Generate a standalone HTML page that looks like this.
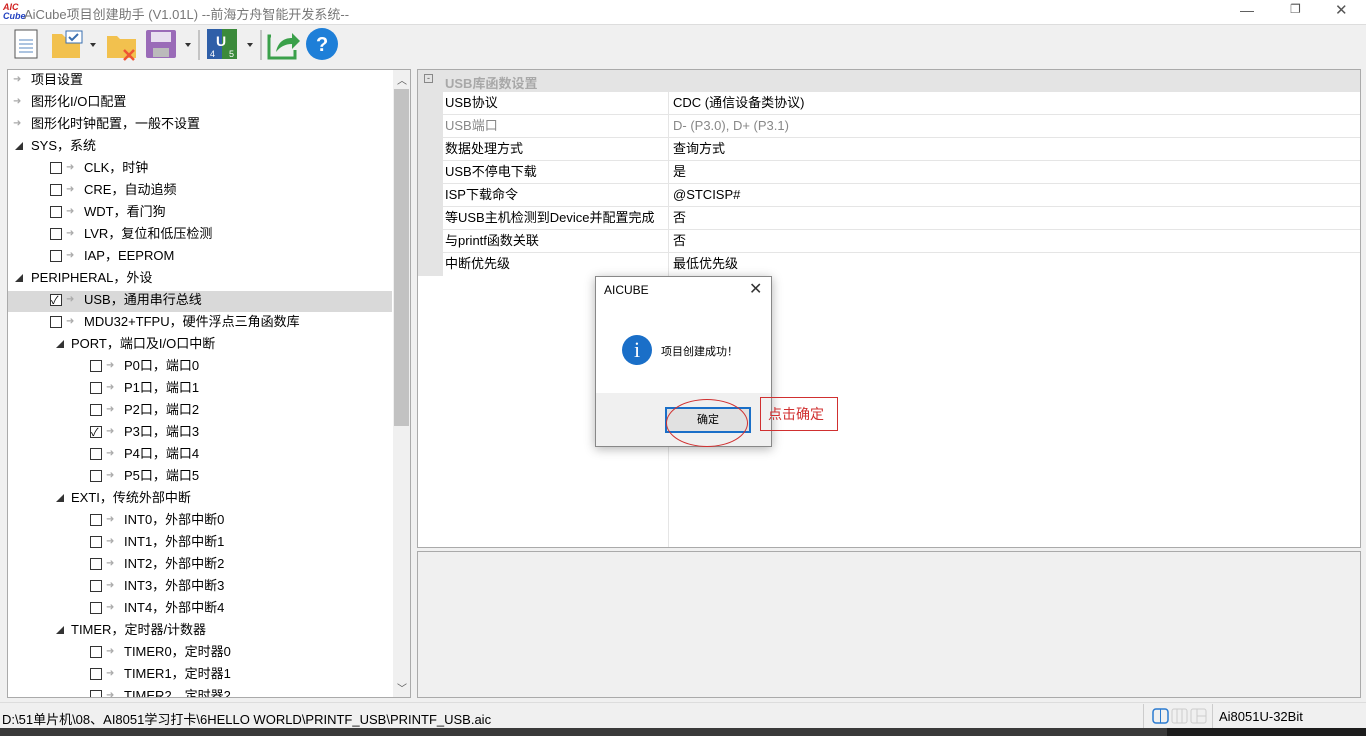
<!DOCTYPE html>
<html><head><meta charset="utf-8"><style>
*{margin:0;padding:0;box-sizing:border-box}
body{width:1366px;height:736px;overflow:hidden;background:#f0f0f0;font-family:"Liberation Sans","Noto Sans CJK SC",sans-serif;font-size:13px;color:#000;position:relative}
.a{position:absolute}
.row{position:absolute;height:22px;line-height:22px;white-space:nowrap}
.cb{position:absolute;width:12px;height:12px;border:1px solid #333;background:#fff;top:5px}
.ar{position:absolute;color:#aaa;font-size:10px}
.tri{position:absolute;font-size:8px;color:#333}
.pr{position:absolute;left:443px;width:917px;height:23px;line-height:22px;border-bottom:1px solid #e5e5e5}
.pr span{position:absolute}
</style></head><body>
<div class="a" style="left:0;top:0;width:1366px;height:24px;background:#fff"></div>
<div class="a" style="left:3px;top:3px;font-size:9px;font-weight:bold;color:#d02020;line-height:9px;font-style:italic">AIC<br><span style="color:#2040c0">Cube</span></div>
<div class="a" style="left:24px;top:4px;color:#777;font-size:13px">AiCube项目创建助手 (V1.01L) --前海方舟智能开发系统--</div>
<div class="a" style="left:1240px;top:2px;color:#555;font-size:14px">—</div>
<div class="a" style="left:1290px;top:2px;color:#555;font-size:12px">❐</div>
<div class="a" style="left:1335px;top:1px;color:#555;font-size:15px">✕</div>
<div class="a" style="left:0;top:24px;width:1366px;height:1px;background:#ddd"></div>
<!-- toolbar -->
<svg class="a" style="left:0;top:26px" width="360" height="40">
<rect x="15" y="4" width="22" height="28" fill="#fff" stroke="#555"/><path d="M19 14h14M19 18h14M19 22h14M19 26h14" stroke="#5a8ac0"/>
<path d="M52 8h10l3 3h15v21H52z" fill="#f2c14e"/><rect x="66" y="5" width="16" height="12" fill="#fff" stroke="#3a6fb0"/><path d="M69 11l3 3 6-6" stroke="#3a6fb0" fill="none" stroke-width="2"/>
<path d="M90 17h6l-3 4z" fill="#333"/>
<path d="M107 10h10l3 3h16v19h-29z" fill="#f2c14e"/><path d="M124 24l10 10M134 24l-10 10" stroke="#e53" stroke-width="2.5"/>
<rect x="146" y="4" width="30" height="28" rx="2" fill="#9a6bb8"/><rect x="151" y="6" width="20" height="10" fill="#e8dff0"/><rect x="153" y="22" width="16" height="9" fill="#bbb"/>
<path d="M185 17h6l-3 4z" fill="#333"/>
<line x1="199" y1="4" x2="199" y2="34" stroke="#999"/>
<rect x="207" y="3" width="30" height="30" fill="#2f5fa8"/><path d="M222 3h15v30h-15z" fill="#3b8a3b"/><text x="216" y="20" fill="#fff" font-size="14" font-weight="bold" font-family="Liberation Sans">U</text><text x="210" y="31" fill="#fff" font-size="9">4</text><text x="229" y="31" fill="#fff" font-size="9">5</text>
<path d="M247 17h6l-3 4z" fill="#333"/>
<line x1="261" y1="4" x2="261" y2="34" stroke="#999"/>
<path d="M271 10h-2v22h26v-8" fill="none" stroke="#3aa04a" stroke-width="3"/><path d="M276 26c2-10 8-14 16-14v-5l8 8-8 8v-5c-7 0-12 3-16 8z" fill="#3aa04a"/>
<circle cx="322" cy="18" r="16" fill="#1e7fd8"/><text x="316" y="25" fill="#fff" font-size="20" font-weight="bold" font-family="Liberation Sans">?</text>
</svg>
<!-- left tree -->
<div class="a" style="left:7px;top:69px;width:404px;height:629px;background:#fff;border:1px solid #aaa;overflow:hidden">
<div class="a" style="left:385px;top:0;width:17px;height:627px;background:#f0f0f0"></div>
<div class="a" style="left:386px;top:19px;width:15px;height:337px;background:#c2c2c2"></div>
<div class="a" style="left:389px;top:2px;font-size:10px;color:#555">︿</div>
<div class="a" style="left:389px;top:610px;font-size:10px;color:#555">﹀</div>
<div class="a" style="left:0;top:221px;width:384px;height:21px;background:#d9d9d9"></div>
</div>
<div id="tree"></div>
<script>
var items=[[0,'项目设置'],[0,'图形化I/O口配置'],[0,'图形化时钟配置，一般不设置'],[1,'SYS，系统'],[2,'CLK，时钟'],[2,'CRE，自动追频'],[2,'WDT，看门狗'],[2,'LVR，复位和低压检测'],[2,'IAP，EEPROM'],[1,'PERIPHERAL，外设'],[2,'USB，通用串行总线',1],[2,'MDU32+TFPU，硬件浮点三角函数库'],[3,'PORT，端口及I/O口中断'],[4,'P0口，端口0'],[4,'P1口，端口1'],[4,'P2口，端口2'],[4,'P3口，端口3',1],[4,'P4口，端口4'],[4,'P5口，端口5'],[3,'EXTI，传统外部中断'],[4,'INT0，外部中断0'],[4,'INT1，外部中断1'],[4,'INT2，外部中断2'],[4,'INT3，外部中断3'],[4,'INT4，外部中断4'],[3,'TIMER，定时器/计数器'],[4,'TIMER0，定时器0'],[4,'TIMER1，定时器1'],[4,'TIMER2，定时器2']];
var h='';items.forEach(function(it,i){var t=69+22*i,l=it[0],s='';
if(l==0)s='<span class="ar" style="left:13px">➜</span><span class="a" style="left:31px">'+it[1]+'</span>';
if(l==1)s='<span class="tri" style="left:15px;top:1px">◢</span><span class="a" style="left:31px">'+it[1]+'</span>';
if(l==2)s='<span class="cb" style="left:50px;'+(it[2]?'':'')+'">'+(it[2]?'<span class="a" style="left:0;top:-5px;font-size:11px">✓</span>':'')+'</span><span class="ar" style="left:66px">➜</span><span class="a" style="left:84px">'+it[1]+'</span>';
if(l==3)s='<span class="tri" style="left:56px;top:1px">◢</span><span class="a" style="left:71px">'+it[1]+'</span>';
if(l==4)s='<span class="cb" style="left:90px">'+(it[2]?'<span class="a" style="left:0;top:-5px;font-size:11px">✓</span>':'')+'</span><span class="ar" style="left:106px">➜</span><span class="a" style="left:124px">'+it[1]+'</span>';
if(t<690)h+='<div class="row" style="top:'+t+'px;left:0;width:390px;height:'+Math.min(22,697-t)+'px;overflow:hidden">'+s+'</div>';});
document.getElementById('tree').innerHTML=h;
</script>
<!-- right grid -->
<div class="a" style="left:417px;top:69px;width:944px;height:479px;background:#fff;border:1px solid #aaa"></div>
<div class="a" style="left:418px;top:70px;width:942px;height:22px;background:#e4e4e4"></div>
<div class="a" style="left:418px;top:92px;width:25px;height:184px;background:#e4e4e4"></div>
<div class="a" style="left:424px;top:74px;width:9px;height:9px;border:1px solid #888;font-size:9px;line-height:6px;text-align:center;color:#555">-</div>
<div class="a" style="left:445px;top:73px;color:#a8a8a8;font-weight:bold">USB库函数设置</div>
<div class="a" style="left:668px;top:92px;width:1px;height:455px;background:#e5e5e5"></div>
<div class="pr" style="top:92px"><span style="left:2px">USB协议</span><span style="left:230px">CDC (通信设备类协议)</span></div>
<div class="pr" style="top:115px;color:#888"><span style="left:2px">USB端口</span><span style="left:230px">D- (P3.0), D+ (P3.1)</span></div>
<div class="pr" style="top:138px"><span style="left:2px">数据处理方式</span><span style="left:230px">查询方式</span></div>
<div class="pr" style="top:161px"><span style="left:2px">USB不停电下载</span><span style="left:230px">是</span></div>
<div class="pr" style="top:184px"><span style="left:2px">ISP下载命令</span><span style="left:230px">@STCISP#</span></div>
<div class="pr" style="top:207px"><span style="left:2px">等USB主机检测到Device并配置完成</span><span style="left:230px">否</span></div>
<div class="pr" style="top:230px"><span style="left:2px">与printf函数关联</span><span style="left:230px">否</span></div>
<div class="pr" style="top:253px;border:none"><span style="left:2px">中断优先级</span><span style="left:230px">最低优先级</span></div>
<div class="a" style="left:417px;top:551px;width:944px;height:147px;background:#f0f0f0;border:1px solid #aaa"></div>
<!-- status -->
<div class="a" style="left:0;top:702px;width:1366px;height:1px;background:#ddd"></div>
<div class="a" style="left:2px;top:709px;font-size:13px">D:\51单片机\08、AI8051学习打卡\6HELLO WORLD\PRINTF_USB\PRINTF_USB.aic</div>
<div class="a" style="left:1143px;top:704px;width:1px;height:24px;background:#ccc"></div>
<div class="a" style="left:1212px;top:704px;width:1px;height:24px;background:#ccc"></div>
<svg class="a" style="left:1152px;top:708px" width="56" height="16"><rect x="1" y="1" width="15" height="14" rx="3" fill="none" stroke="#2a7ad0" stroke-width="1.5"/><line x1="8.5" y1="1" x2="8.5" y2="15" stroke="#2a7ad0"/><rect x="20" y="1" width="15" height="14" rx="2" fill="none" stroke="#ccc"/><path d="M25 1v14M30 1v14" stroke="#ccc"/><rect x="39" y="1" width="15" height="14" rx="2" fill="none" stroke="#ccc"/><path d="M45 1v14M45 8h9" stroke="#ccc"/></svg>
<div class="a" style="left:1219px;top:709px">Ai8051U-32Bit</div>
<div class="a" style="left:1167px;top:728px;width:199px;height:8px;background:#1c1c1c"></div>
<div class="a" style="left:0;top:728px;width:1167px;height:8px;background:#3a3a3a"></div>
<!-- dialog -->
<div class="a" style="left:595px;top:276px;width:177px;height:171px;background:#fff;border:1px solid #888;box-shadow:0 2px 10px rgba(0,0,0,.3)"></div>
<div class="a" style="left:604px;top:283px;font-size:12px">AICUBE</div>
<div class="a" style="left:749px;top:279px;font-size:16px;color:#333">✕</div>
<div class="a" style="left:622px;top:335px;width:30px;height:30px;border-radius:50%;background:#1a6fc8;color:#fff;text-align:center;font-size:22px;line-height:30px;font-family:'Liberation Serif',serif">i</div>
<div class="a" style="left:661px;top:343px;font-size:11px">项目创建成功！</div>
<div class="a" style="left:596px;top:393px;width:175px;height:53px;background:#f0f0f0"></div>
<div class="a" style="left:665px;top:407px;width:86px;height:26px;border:2px solid #1a6fc8;background:#e1e1e1;text-align:center;line-height:22px;font-size:11px">确定</div>
<div class="a" style="left:666px;top:399px;width:82px;height:48px;border:1px solid #d03030;border-radius:50%"></div>
<div class="a" style="left:760px;top:397px;width:78px;height:34px;border:1px solid #d03030;color:#d03030;font-size:14px;line-height:32px;padding-left:7px">点击确定</div>
</body></html>
